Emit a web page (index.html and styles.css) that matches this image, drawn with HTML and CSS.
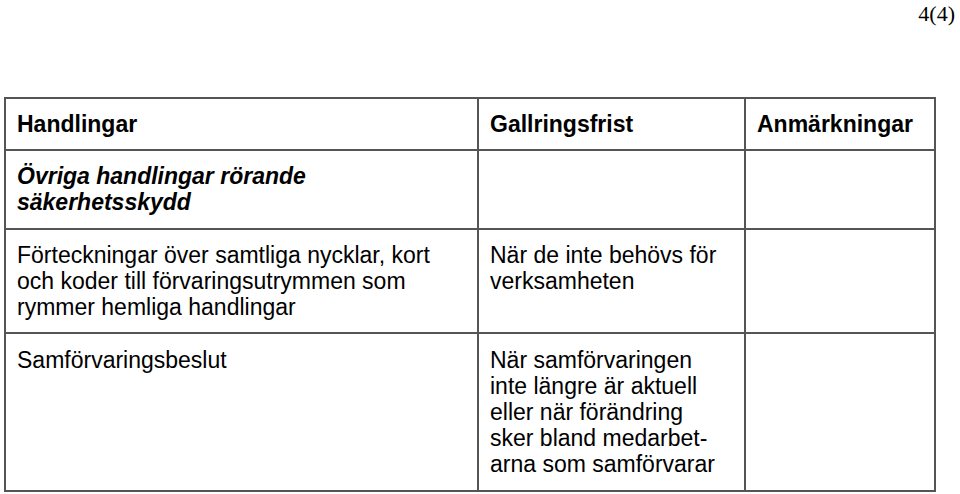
FILE: index.html
```html
<!DOCTYPE html>
<html lang="sv">
<head>
<meta charset="utf-8">
<title>Gallringsfrister</title>
<link rel="stylesheet" href="styles.css">
</head>
<body>
<div class="page-head">
  <span class="page-no">4(4)</span>
</div>
<table class="doc-table">
  <colgroup>
    <col class="c1">
    <col class="c2">
    <col class="c3">
  </colgroup>
  <thead>
    <tr>
      <th>Handlingar</th>
      <th>Gallringsfrist</th>
      <th>Anmärkningar</th>
    </tr>
  </thead>
  <tbody>
    <tr class="group-row">
      <td class="group">Övriga handlingar rörande<br>säkerhetsskydd</td>
      <td></td>
      <td></td>
    </tr>
    <tr>
      <td>Förteckningar över samtliga nycklar, kort<br>och koder till förvaringsutrymmen som<br>rymmer hemliga handlingar</td>
      <td>När de inte behövs för<br>verksamheten</td>
      <td></td>
    </tr>
    <tr class="last-row">
      <td>Samförvaringsbeslut</td>
      <td>När samförvaringen<br>inte längre är aktuell<br>eller när förändring<br>sker bland medarbet-<br>arna som samförvarar</td>
      <td></td>
    </tr>
  </tbody>
</table>
</body>
</html>
```
FILE: styles.css
```css
html, body {
  margin: 0;
  padding: 0;
  background: #fff;
  color: #000;
}

.page-head {
  height: 97px;
  display: flex;
  justify-content: flex-end;
  align-items: flex-start;
  padding-right: 5px;
  box-sizing: border-box;
}

.page-no {
  font-family: "Liberation Serif", "Times New Roman", serif;
  font-size: 22px;
  line-height: 25px;
  margin-top: 1px;
}

.doc-table {
  margin-left: 4px;
  width: 930px;
  border-collapse: collapse;
  table-layout: fixed;
  font-family: "Liberation Sans", Arial, sans-serif;
  font-size: 23px;
  line-height: 26px;
}

.c1 { width: 473px; }
.c2 { width: 267px; }
.c3 { width: 190px; }

.doc-table th,
.doc-table td {
  border: 2px solid #555;
  padding: 12px 8px 12px 11px;
  text-align: left;
  vertical-align: top;
  white-space: nowrap;
}

.doc-table th {
  font-weight: bold;
}

.doc-table td.group {
  font-weight: bold;
  font-style: italic;
}

.doc-table .group-row td {
  padding-bottom: 13px;
}

.doc-table .last-row td {
  padding-top: 13px;
  padding-bottom: 13px;
}
```
